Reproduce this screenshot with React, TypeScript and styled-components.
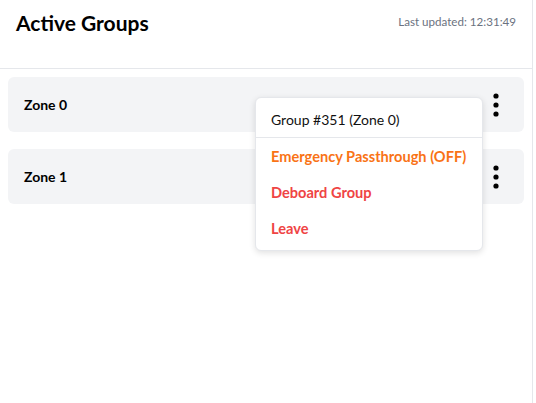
import React from "react";
import styled, { createGlobalStyle } from "styled-components";

const GlobalStyle = createGlobalStyle`
  html, body {
    margin: 0;
    padding: 0;
    background: #ffffff;
  }
  body {
    font-family: "Lato", "Open Sans", sans-serif;
    color: #000000;
  }
`;

const Page = styled.div`
  width: 533px;
  height: 403px;
  box-sizing: border-box;
  border-right: 1px solid #e5e7eb;
`;

const Header = styled.div`
  height: 69px;
  box-sizing: border-box;
  padding: 10px 16px 0 16px;
  display: flex;
  justify-content: space-between;
  align-items: flex-start;
  border-bottom: 1px solid #e5e7eb;
`;

const Title = styled.h1`
  margin: 0;
  font-size: 21px;
  line-height: 26px;
  font-weight: 700;
`;

const Updated = styled.span`
  font-size: 11.6px;
  line-height: 24px;
  color: #6b7280;
`;

const List = styled.div`
  padding: 8px;
  display: flex;
  flex-direction: column;
  gap: 17px;
`;

const Card = styled.div`
  position: relative;
  height: 55px;
  padding: 0 16px;
  display: flex;
  align-items: center;
  justify-content: space-between;
  background: #f3f4f6;
  border-radius: 6px;
`;

const ZoneName = styled.span`
  font-size: 14px;
  font-weight: 700;
`;

const DotsButton = styled.button`
  border: none;
  background: none;
  padding: 0;
  margin-right: 9px;
  display: flex;
  cursor: pointer;
`;

const Menu = styled.div`
  position: absolute;
  top: 20px;
  right: 41px;
  width: 228px;
  box-sizing: border-box;
  padding-bottom: 4px;
  background: #ffffff;
  border: 1px solid #e5e7eb;
  border-radius: 6px;
  box-shadow: 0 2px 6px rgba(0, 0, 0, 0.12);
  z-index: 10;
`;

const MenuHeader = styled.div`
  height: 40px;
  box-sizing: border-box;
  padding: 3px 15px 0;
  display: flex;
  align-items: center;
  font-size: 14px;
  color: #111111;
  border-bottom: 1px solid #e5e7eb;
`;

const MenuItem = styled.div<{ $tone: "warn" | "danger" }>`
  height: 36px;
  padding: 0 15px;
  display: flex;
  align-items: center;
  font-size: 14.6px;
  font-weight: 700;
  color: ${(p) => (p.$tone === "warn" ? "#f97316" : "#ef4444")};
  cursor: pointer;
`;

const Dots = () => (
  <svg width="6" height="24" viewBox="0 0 6 24">
    <circle cx="3" cy="3" r="2.6" fill="#000" />
    <circle cx="3" cy="12" r="2.6" fill="#000" />
    <circle cx="3" cy="21" r="2.6" fill="#000" />
  </svg>
);

const zones = ["Zone 0", "Zone 1"];

export default function App() {
  return (
    <>
      <GlobalStyle />
      <Page>
        <Header>
          <Title>Active Groups</Title>
          <Updated>Last updated: 12:31:49</Updated>
        </Header>
        <List>
          {zones.map((zone, i) => (
            <Card key={zone}>
              <ZoneName>{zone}</ZoneName>
              <DotsButton>
                <Dots />
              </DotsButton>
              {i === 0 && (
                <Menu>
                  <MenuHeader>Group #351 (Zone 0)</MenuHeader>
                  <MenuItem $tone="warn">Emergency Passthrough (OFF)</MenuItem>
                  <MenuItem $tone="danger">Deboard Group</MenuItem>
                  <MenuItem $tone="danger">Leave</MenuItem>
                </Menu>
              )}
            </Card>
          ))}
        </List>
      </Page>
    </>
  );
}
